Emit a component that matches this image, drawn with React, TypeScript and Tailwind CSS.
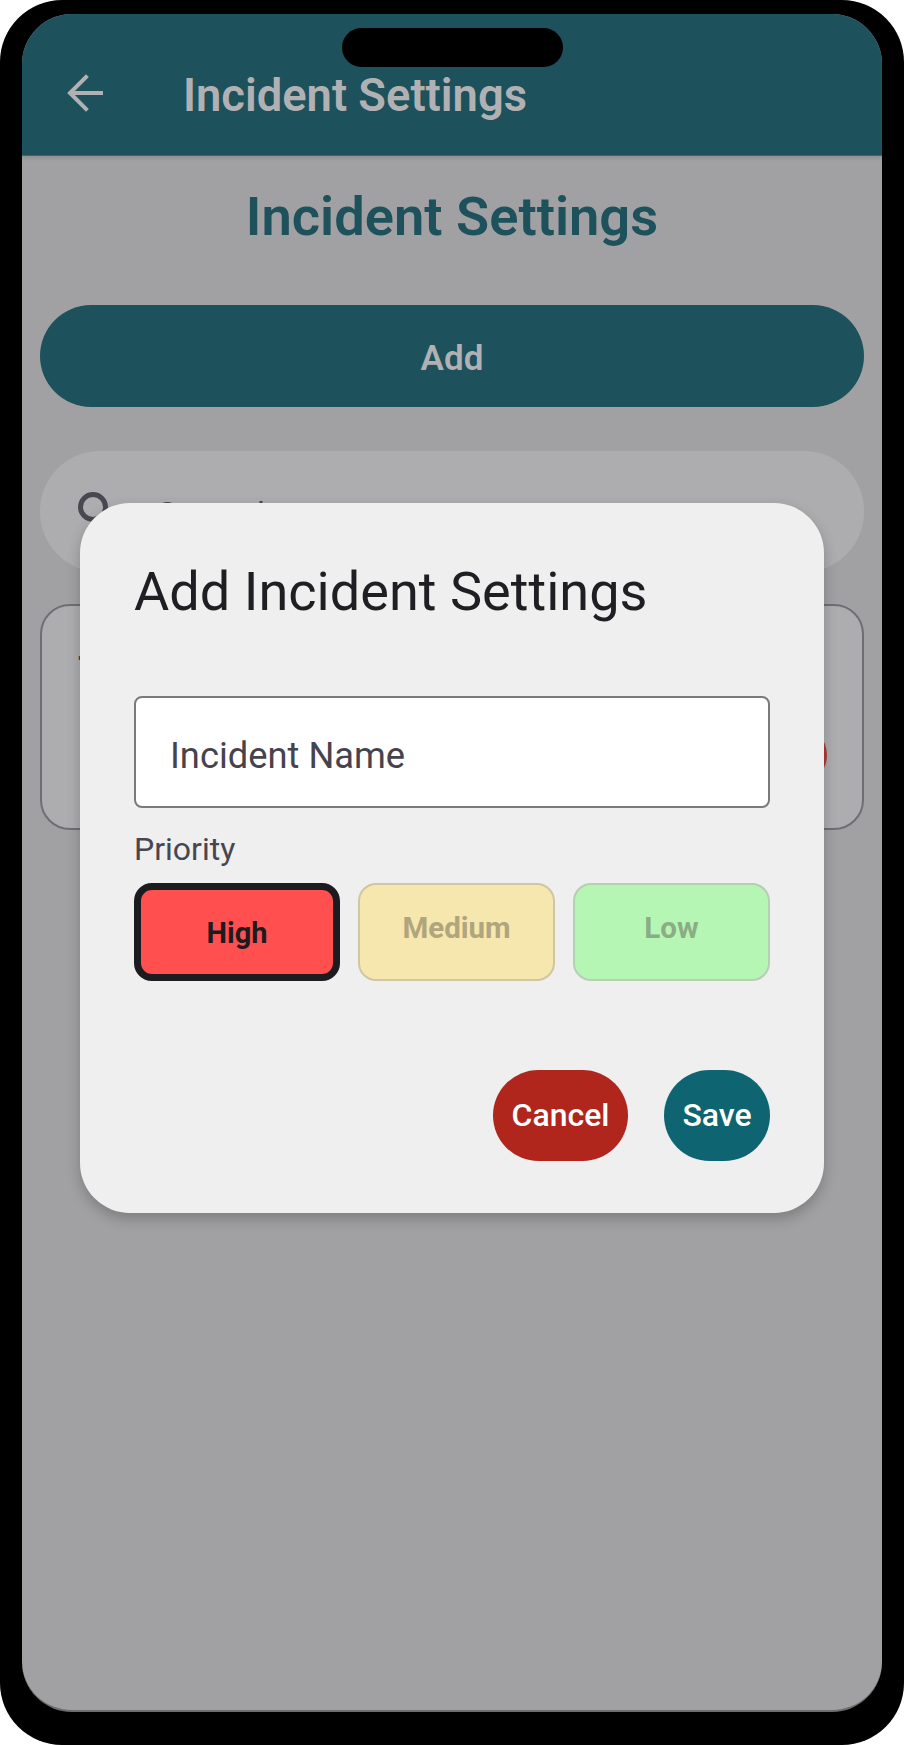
const roboto = "font-['Roboto',sans-serif]";

function BackArrow() {
  return (
    <svg width="38" height="38" viewBox="0 0 38 38" fill="none" stroke="#b1b1b3" strokeWidth="4" strokeLinecap="square" aria-hidden="true">
      <path d="M35 19H5" />
      <path d="M20 3L4 19l16 16" />
    </svg>
  );
}

export default function App() {
  return (
    <div className="w-[904px] h-[1745px] bg-white">
      <div className={`relative h-full rounded-[62px] bg-black pt-[14px] px-[22px] pb-[33px] ${roboto}`}>
        <div className="relative h-full overflow-hidden rounded-[50px] bg-[#a1a1a3] border-b-2 border-[#6d6d6f]">
          {/* notch */}
          <div className="absolute left-[320px] top-[14px] w-[221px] h-[39px] rounded-full bg-black" />

          <header className="flex items-center h-[142px] bg-[#1d515c] border-b border-[#3b6a74] pl-[44px] pt-[16px] shadow-[0_2px_4px_rgba(0,0,0,0.12)]">
            <BackArrow />
            <span className="ml-[79px] mt-[6px] text-[45.3px] leading-[54px] font-semibold text-[#b1b1b3]">Incident Settings</span>
          </header>

          <main className="px-[18px]">
            <h1 className="mt-[31px] text-center text-[54.3px] leading-[60px] font-semibold text-[#1d515c]">Incident Settings</h1>

            <button type="button" className="mt-[58px] flex items-center justify-center w-full h-[102px] rounded-full bg-[#1d515c] pt-[6px] text-[35px] font-semibold text-[#b1b1b3]">
              Add
            </button>

            <div className="mt-[44px] flex items-center gap-[48px] h-[121px] rounded-[60px] bg-[#adadaf] pl-[38px] pb-[10px]">
              <div className="w-[30px] h-[30px] rounded-full border-[5px] border-[#4a4752]" />
              <span className="mt-[12px] text-[32px] text-[#4a4752]">General</span>
            </div>

            <div className="mt-[32px] flex items-center justify-between h-[226px] rounded-[30px] border-2 border-[#6f6e74] bg-[#adadaf] pl-[36px] pr-[35px]">
              <span className="mb-[94px] text-[36px] font-semibold text-[#1d515c]">Test</span>
              <div className="mt-[76px] w-[60px] h-[60px] rounded-full bg-[#b03a38]" />
            </div>
          </main>

          {/* add dialog */}
          <div className="absolute left-[58px] top-[489px] w-[744px] rounded-[50px] bg-[#efefef] px-[54px] pt-[59px] pb-[52px] shadow-[0_6px_14px_rgba(0,0,0,0.22)]">
            <h2 className="text-[54.1px] leading-[60px] text-[#1f1e22]">Add Incident Settings</h2>

            <div className="mt-[74px] flex items-center h-[112px] rounded-[8px] border-2 border-[#7a797e] bg-white pl-[34px] pt-[8px] text-[36.3px] text-[#46434c]">
              Incident Name
            </div>

            <div className="mt-[22px] text-[32px] leading-[38px] text-[#49454f]">Priority</div>

            <div className="mt-[15px] flex gap-[18px]">
              <button type="button" className="flex items-center justify-center w-[206px] h-[98px] rounded-[18px] border-[7px] border-[#1c1b1f] bg-[#ff4f4f] pt-[4px] text-[29px] font-bold text-[#1c1b1f]">
                High
              </button>
              <button type="button" className="flex flex-1 items-center justify-center h-[98px] rounded-[18px] border-2 border-[#cfc6a3] bg-[#f6e7ae] pb-[8px] text-[29.5px] font-bold text-[#b0a57d]">
                Medium
              </button>
              <button type="button" className="flex flex-1 items-center justify-center h-[98px] rounded-[18px] border-2 border-[#b5cfb2] bg-[#b6f6b5] pb-[8px] text-[29.5px] font-bold text-[#8bad85]">
                Low
              </button>
            </div>

            <div className="mt-[89px] flex justify-end gap-[36px]">
              <button type="button" className="w-[135px] h-[91px] rounded-full bg-[#b0261c] pb-[2px] text-[32px] font-medium text-white">
                Cancel
              </button>
              <button type="button" className="w-[106px] h-[91px] rounded-full bg-[#0e6470] pb-[2px] text-[32px] font-medium text-white">
                Save
              </button>
            </div>
          </div>
        </div>
      </div>
    </div>
  );
}
